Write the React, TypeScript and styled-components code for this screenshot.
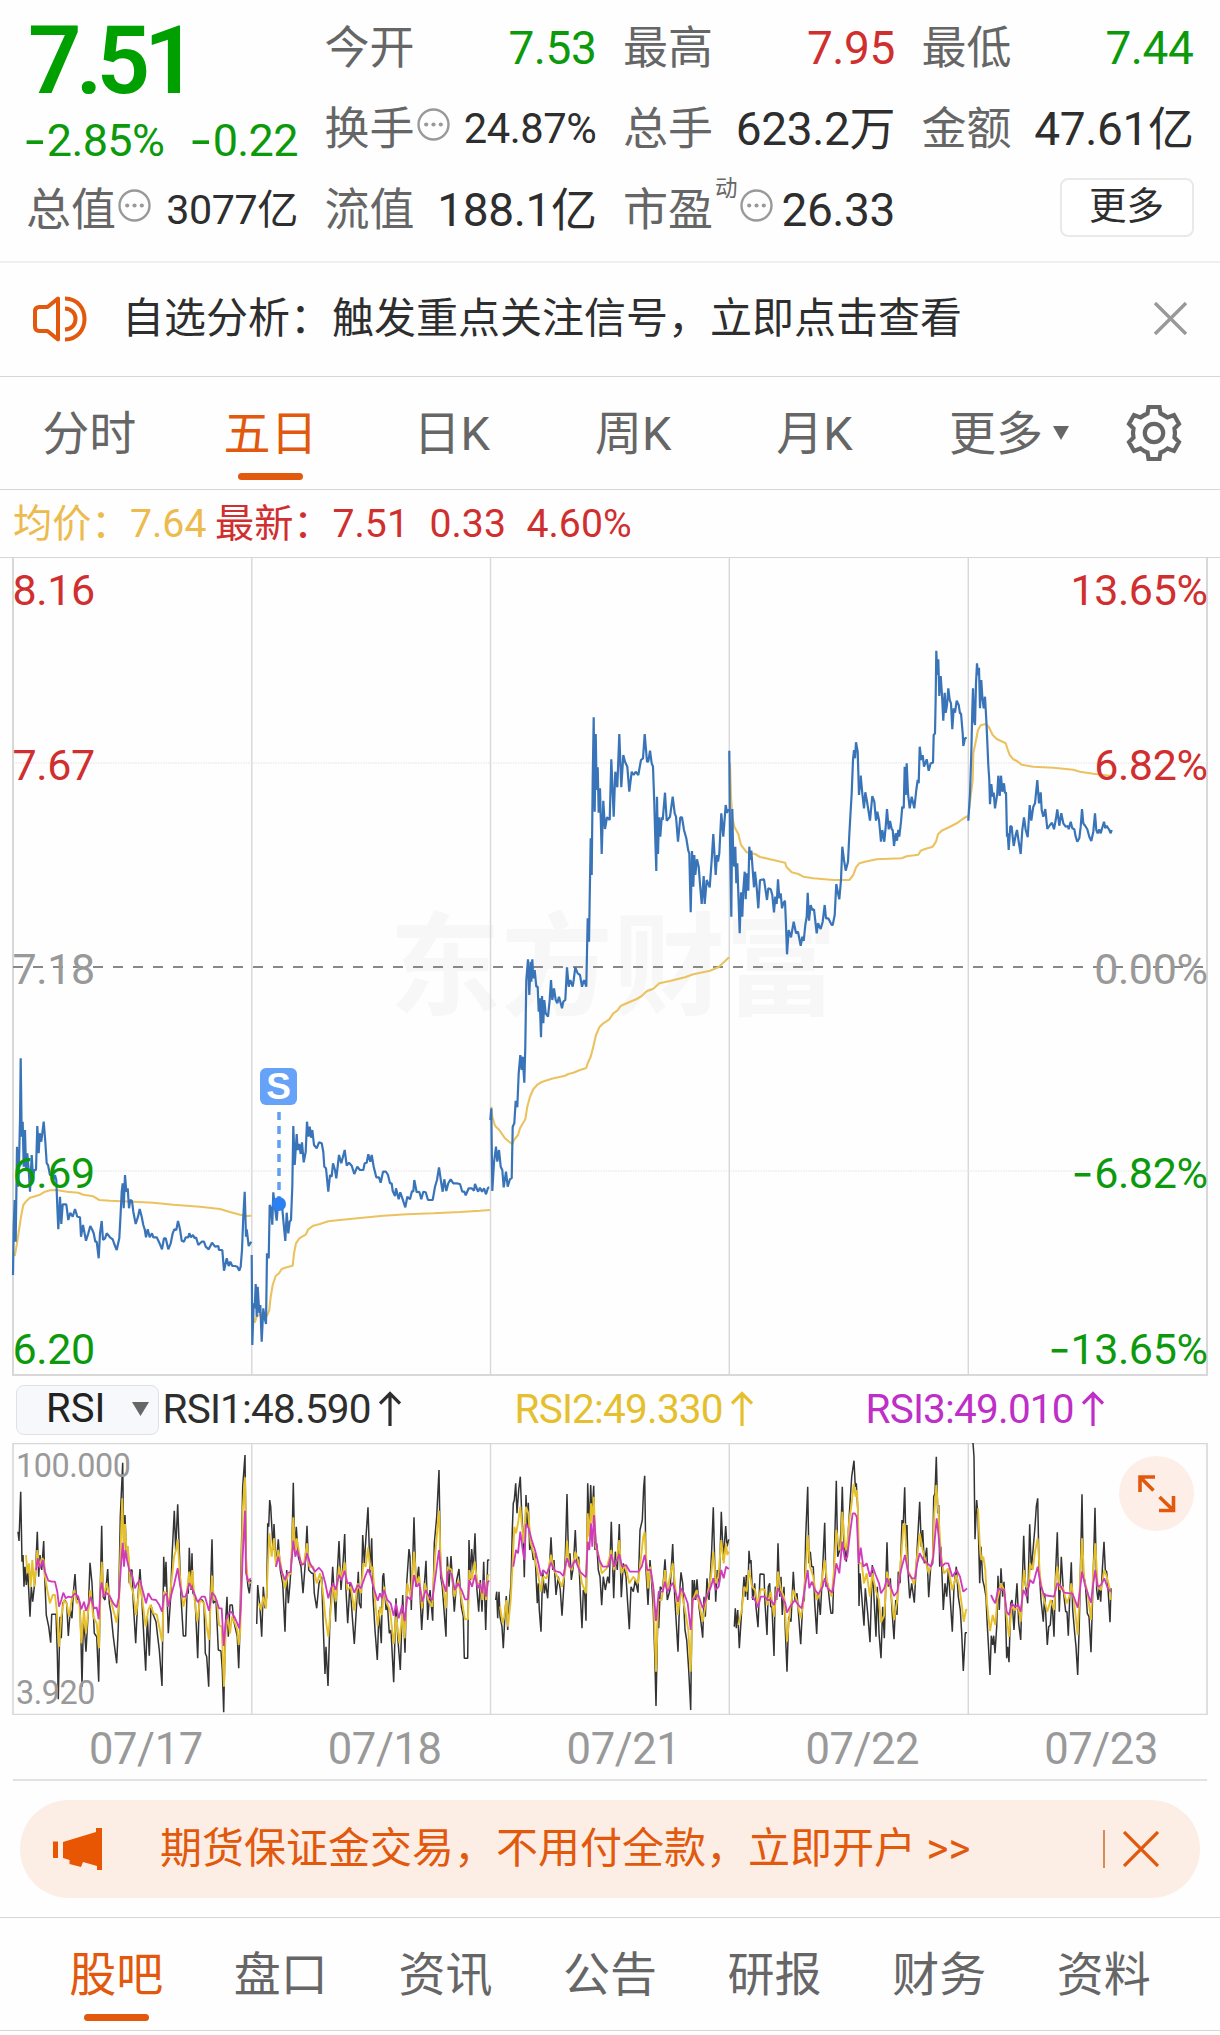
import React from "react";
import styled, { createGlobalStyle } from "styled-components";

const GREEN = "#0c9a0c";
const RED = "#d02f2f";
const ORANGE = "#e2580c";
const GREY = "#666";
const INK = "#2e2e2e";

const GlobalStyle = createGlobalStyle`
  * { box-sizing: border-box; }
  body {
    margin: 0;
    background: #fefefe;
    font-family: Roboto, "Noto Sans CJK SC", sans-serif;
    color: ${INK};
  }
`;

const Page = styled.main`
  width: 1220px;
  height: 2035px;
  display: flex;
  flex-direction: column;
  overflow: hidden;
  background: #fefefe;
`;

/* ---------- quote header ---------- */

const Header = styled.header`
  height: 263px;
  flex: none;
  display: grid;
  grid-template-columns: repeat(4, 272px);
  grid-template-rows: repeat(3, 81px);
  column-gap: 26.5px;
  padding: 7px 0 0 26px;
  border-bottom: 2px solid #efefef;
`;

const Quote = styled.div`
  grid-row: span 2;
  color: #00a000;
`;

const BigPrice = styled.div`
  font-size: 94px;
  font-weight: 600;
  line-height: 108px;
  letter-spacing: -6px;
  padding-left: 2px;
`;

const Change = styled.div`
  display: flex;
  justify-content: space-between;
  font-size: 45px;
  line-height: 52px;
  letter-spacing: -0.6px;
  color: ${GREEN};
`;

const Minus = styled.span`
  display: inline-block;
  font-family: Inter, sans-serif;
  letter-spacing: 0;
  line-height: 1;
  transform: scaleX(1.14);
  transform-origin: right;
`;

const Cell = styled.div`
  display: flex;
  align-items: center;
  height: 81px;
  white-space: nowrap;
`;

const Label = styled.span`
  padding-top: 2px;
  font-size: 45px;
  line-height: 60px;
  color: ${GREY};
`;

const Value = styled.span<{ $color?: string; $size?: number }>`
  margin-left: auto;
  font-size: ${(p) => p.$size ?? 46}px;
  line-height: 60px;
  letter-spacing: -0.4px;
  color: ${(p) => p.$color ?? INK};
`;

const Sup = styled.sup`
  align-self: flex-start;
  margin: 4px 0 0 2px;
  font-size: 22.5px;
  line-height: 30px;
  color: ${GREY};
`;

const InfoDot = styled.svg`
  width: 33px;
  height: 33px;
  margin: 0 0 8px 2px;
`;

const MoreButton = styled.button`
  margin: 0 0 4px auto;
  width: 134px;
  height: 59px;
  padding: 0 0 3px;
  border: 2px solid #e9e9e9;
  border-radius: 8px;
  background: #fff;
  font: inherit;
  font-size: 37.5px;
  line-height: 50px;
  color: ${INK};
`;

const Info = () => (
  <InfoDot viewBox="0 0 33 33" fill="#999">
    <circle cx="16.5" cy="16.5" r="15" fill="none" stroke="#999" strokeWidth="2.4" />
    <circle cx="9.2" cy="16.5" r="2.1" />
    <circle cx="16.5" cy="16.5" r="2.1" />
    <circle cx="23.8" cy="16.5" r="2.1" />
  </InfoDot>
);

/* ---------- notice ---------- */

const Notice = styled.section`
  height: 114px;
  flex: none;
  display: flex;
  align-items: center;
  padding: 0 33px 2px 32px;
  border-bottom: 1px solid #d6d6d6;
`;

const NoticeText = styled.span`
  flex: 1;
  margin-left: 34px;
  font-size: 42px;
  line-height: 56px;
  color: ${INK};
`;

/* ---------- tab bars ---------- */

const TabBar = styled.nav<{ $pad?: number; $height: number }>`
  height: ${(p) => p.$height}px;
  flex: none;
  display: flex;
  align-items: center;
  padding: 0 ${(p) => p.$pad ?? 0}px;
  border-bottom: 1px solid #d6d6d6;
`;

const Tab = styled.a<{ $width: number; $active?: boolean }>`
  position: relative;
  width: ${(p) => p.$width}px;
  height: 100%;
  display: flex;
  align-items: center;
  justify-content: center;
  padding-top: 2px;
  font-size: 47px;
  line-height: 64px;
  color: ${(p) => (p.$active ? ORANGE : GREY)};
  &::after {
    content: "";
    display: ${(p) => (p.$active ? "block" : "none")};
    position: absolute;
    bottom: 9px;
    width: 65px;
    height: 7px;
    border-radius: 4px;
    background: ${ORANGE};
  }
`;

const PeriodTab = styled(Tab)`
  left: -1.5px;
`;

const TabCaret = styled.svg`
  position: absolute;
  right: 18px;
  top: 49px;
  width: 16px;
  height: 14px;
`;

const IconSlot = styled.div`
  width: 132px;
  display: flex;
  justify-content: center;
`;

/* ---------- price legend ---------- */

const Legend = styled.div`
  height: 68px;
  flex: none;
  display: flex;
  align-items: center;
  padding: 1px 0 0 13px;
  font-size: 39.2px;
  line-height: 52px;
  color: ${RED};
  border-bottom: 1px solid #d6d6d6;
  white-space: nowrap;
`;

const LegendItem = styled.span<{ $width: number; $color?: string }>`
  width: ${(p) => p.$width}px;
  color: ${(p) => p.$color ?? "inherit"};
`;

/* ---------- charts ---------- */

const Panel = styled.section<{ $height: number }>`
  position: relative;
  flex: none;
  height: ${(p) => p.$height}px;
`;

const Plot = styled.svg`
  position: relative;
  display: block;
  width: 1220px;
  height: 100%;
`;

const AxisLabel = styled.span<{ $top: number; $side: "left" | "right"; $color: string; $size?: number; $inset?: number }>`
  position: absolute;
  top: ${(p) => p.$top}px;
  ${(p) => p.$side}: ${(p) => p.$inset ?? 12.5}px;
  transform: translateY(-50%);
  font-size: ${(p) => p.$size ?? 43}px;
  line-height: 1;
  letter-spacing: -0.4px;
  white-space: nowrap;
  color: ${(p) => p.$color};
`;

const Watermark = styled.div`
  position: absolute;
  left: 389px;
  top: 331px;
  font-size: 112px;
  line-height: 160px;
  font-weight: 700;
  color: #f7f7f7;
`;

const Marker = styled.div`
  position: absolute;
  left: 260px;
  top: 510px;
  width: 37px;
  height: 37px;
  border-radius: 6px;
  background: #65a2f8;
  color: #fff;
  font: 700 37px/37px "Liberation Sans", sans-serif;
  text-align: center;
`;

const IndicatorBar = styled.div`
  height: 67px;
  flex: none;
  display: flex;
  align-items: center;
  padding-left: 16px;
  font-size: 40.5px;
`;

const IndicatorPicker = styled.button`
  width: 143px;
  height: 50px;
  display: flex;
  align-items: center;
  justify-content: space-between;
  padding: 0 9px 2px 29px;
  border: 1px solid #dfe1e5;
  border-radius: 8px;
  background: #f6f8fb;
  font: inherit;
  font-size: 40px;
  line-height: 46px;
  color: #222;
`;

const Indicator = styled.span<{ $color: string; $width: number }>`
  display: flex;
  align-items: center;
  gap: 8px;
  width: ${(p) => p.$width}px;
  padding: 0 0 2px 3.5px;
  line-height: 50px;
  letter-spacing: -0.8px;
  color: ${(p) => p.$color};
`;

const ExpandButton = styled.button`
  position: absolute;
  right: 26px;
  top: 13px;
  width: 75px;
  height: 75px;
  padding: 0;
  border: 0;
  border-radius: 50%;
  background: #fdefe7;
`;

const Dates = styled.div`
  height: 66px;
  flex: none;
  margin: 0 13px;
  display: grid;
  grid-template-columns: repeat(5, 1fr);
  border-bottom: 2px solid #e2e2e2;
`;

const DateText = styled.span`
  padding: 1px 0 0 27px;
  text-align: center;
  font-size: 43.5px;
  line-height: 67px;
  letter-spacing: -0.4px;
  color: #999;
`;

/* ---------- promo ---------- */

const PromoWrap = styled.section`
  height: 137px;
  flex: none;
  padding: 19px 20px 0;
  border-bottom: 1px solid #d6d6d6;
`;

const Promo = styled.div`
  height: 98px;
  display: flex;
  align-items: center;
  padding: 0 41px 0 32px;
  border-radius: 49px;
  background: #fceee5;
  color: ${ORANGE};
`;

const PromoText = styled.span`
  flex: 1;
  margin-left: 56px;
  font-size: 42px;
  line-height: 56px;
`;

const Divider = styled.i`
  width: 2px;
  height: 38px;
  margin: 0 18px 0 0;
  background: #dc8a58;
`;

/* ---------- series: coordinates are thirds of a pixel ---------- */

type Piece = [number, number, string];

const price: Piece[] = [
  [0, 1020, "39,765 41,620 44,540 47,665 51,380 54,500 57,430 60,300 62,115 65,350 68,305 71,440 75,330 78,450 82,400 86,450 90,515 95,405 99,470 103,450 108,450 112,318 116,400 119,340 124,365 131,305 136,365 140,430 144,435 150,465 155,465 160,480 165,465 169,480 172,560 175,628 180,530 184,612 188,553 199,553 205,600 211,578 218,590 225,567 232,590 240,592 243,650 249,615 258,662 265,640 271,618 276,628 281,640 286,665 290,665 296,715 300,640 305,603 309,660 315,655 320,640 330,652 338,658 343,672 350,690 358,655 361,600 365,515 368,490 371,565 375,465 379,515 383,505 387,565 391,540 396,543 400,575 407,612 414,590 419,567 425,590 430,615 434,628 438,652 443,628 449,652 456,640 460,652 470,652 478,668 486,688 492,655 497,655 505,688 512,670 518,640 523,628 529,630 534,603 540,628 545,662 552,665 557,652 565,652 568,640 573,652 579,645 584,655 588,652 595,675 605,665 612,665 617,680 626,688 636,668 645,680 655,678 657,690 667,690 672,752 680,715 686,738 691,725 697,738 705,738 712,740 718,752 722,740 726,690 730,590 734,515 738,650 740,628 746,678 754,665"],
  [0, 1020, "755,705 757,975 761,850 764,865 767,792 770,890 773,800 778,880 781,855 785,965 790,865 794,895 798,912 801,700 806,715 809,555 813,565 817,614 820,517 825,565 830,602 835,540 840,555 846,555 850,600 856,663 860,578 865,640 869,605 873,600 877,500 880,318 884,435 890,342 893,390 898,372 902,402 906,367 911,427 917,395 921,305 925,350 929,320 933,353 937,330 942,375 950,385 957,367 965,370 970,395 973,440 978,445 985,515 990,465 995,470 999,430 1005,450 1009,475 1017,405 1024,430 1034,390 1040,437 1047,428 1055,437 1063,462 1072,440 1080,450 1090,450 1094,430 1100,428 1105,403 1111,425 1115,405 1121,440 1129,472 1137,472 1142,488 1149,455 1158,455 1164,465 1170,490 1175,490 1178,513 1185,528 1188,505 1196,538 1201,517 1208,538 1216,562 1222,530 1230,538 1236,513 1240,515 1243,480 1250,517 1258,515 1264,538 1270,515 1277,517 1284,540 1298,540 1305,500 1311,480 1317,442 1324,490 1328,515 1333,478 1339,513 1345,490 1352,478 1360,490 1370,490 1380,492 1387,515 1393,515 1397,526 1406,505 1415,505 1422,512 1425,492 1434,515 1440,503 1446,515 1452,505 1458,523 1464,503 1468,503"],
  [480, 680, "31,1320 34,1285 37,1533 42,1447 48,1400 52,1445 57,1410 62,1460 67,1470 71,1522 78,1475 83,1520 90,1497 95,1495 98,1340 103,1330 107,1262 112,1282 116,1180 121,1125 125,1170 128,1130 133,1208 136,1100 139,900 144,838 148,945 152,845 154,905 157,838 160,895 164,870 169,920 173,920 176,995 179,955 183,1072 186,948 190,1030 193,960 197,1000 204,1010 209,960 213,900 217,960 222,925 227,960 232,970 237,950 246,985 250,965 256,960 261,862 266,920 271,900 278,920 281,900 286,862 293,880 300,885 306,920 312,900 319,920 323,715 327,785 330,600 332,475 335,585 338,300 341,112 344,395 347,162 350,330 353,262 356,398 360,325 365,522 370,362 375,447 381,412 389,420 394,238 401,410 406,275 412,322 418,162 424,322 430,225 435,245 442,260 448,335 455,275 461,285 467,275 475,285 483,240 489,235 494,162 501,245 505,245 510,212 515,250 519,260 523,370 526,480 529,573 531,350 534,522 537,412 541,470 545,412 548,420 555,338 560,422 570,410 578,350 584,400 588,410 594,485 601,412 606,412 612,450 619,475 625,512 628,520 632,697 636,513 640,620 643,525 646,585 651,538 656,560 660,612 665,672 671,588 674,672 680,600 689,622 695,540 700,462 707,585 711,525 714,545 718,520 724,400 730,470 737,375 741,398 745,390 748,390"],
  [480, 680, "748,212 750,470 754,710 757,387 760,540 763,560 766,500 769,610 772,550 775,640 779,760 783,637 787,710 790,630 794,575 797,658 800,580 805,632 808,500 811,540 814,512 818,570 822,622 825,575 830,622 835,685 840,600 852,598 856,625 861,660 865,625 872,628 877,645 882,697 886,650 890,672 894,598 898,655 902,640 906,685 910,670 915,662 918,735 921,823 926,750 933,772 941,725 948,760 954,755 962,797 967,770 971,783 976,735 980,710 983,638 987,722 992,675 997,690 1002,688 1010,760 1014,730 1022,747 1028,725 1034,675 1038,715 1045,715 1055,735 1058,735 1064,705 1069,612 1074,640 1078,658 1083,600 1087,500 1092,540 1097,572 1104,545 1108,465 1112,390 1115,340 1119,240 1122,210 1125,235 1128,187 1133,215 1137,345"],
  [840, 620, "57,525 62,467 67,520 72,565 76,517 82,550 90,602 97,528 103,545 108,602 112,575 117,600 123,665 127,630 133,665 137,620 141,567 146,628 150,603 155,628 158,630 162,678 167,640 171,662 175,630 178,650 183,605 187,560 191,565 194,440 197,525 200,430 204,520 209,565 215,530 223,565 229,510 233,480 236,490 239,380 244,420 248,405 252,440 260,418 266,452 272,430 279,428 281,345 285,340 287,230 289,92 292,165 295,118 298,228 302,168 306,225 310,302 314,218 317,278 321,255 325,205 329,240 333,250 337,328 341,265 345,278 350,242 356,255 360,280 363,280 368,340 370,378 375,355 380,353"],
  [840, 620, "385,602 390,520 394,400 397,270 399,205 402,300 405,315 408,190 411,130 414,165 417,143 420,265 424,180 427,230 431,265 435,230 439,300 441,345 445,435 448,480 450,553 454,492 458,530 461,518 465,565 472,520 475,467 479,528 483,467 487,515 492,490 495,520 498,517 501,650 503,640 506,690 511,618 515,620 517,640 521,678 527,645 531,630 536,665 542,702 547,630 552,592 557,630 563,652 569,555 574,602 580,560 585,550 592,480 597,550 602,517 605,570 610,590 616,567 622,627 630,615 636,608 642,628 648,595 652,568 658,617 664,580 670,610 677,620 684,618 686,628 692,605 697,625 703,628 707,650 712,665 718,655 722,620 726,567 730,610 736,618 742,628 748,650 754,663 760,635 765,580 769,630 773,640 778,628 782,640 792,605 796,625 800,617 808,630 812,640 815,630"],
];

const average: Piece[] = [
  [0, 1020, "44,708 50,675 57,630 64,585 70,555 80,542 90,533 105,529 120,524 135,515 150,511 170,510 200,515 235,518 250,524 280,529 298,540 330,542 400,545 460,548 520,554 600,560 660,567 690,576 720,584 740,588 754,587"],
  [0, 1020, "757,880 764,908 770,890 785,880 800,890 808,870 812,830 818,795 827,768 837,760 845,747 860,742 878,737 882,700 888,670 898,655 918,643 925,628 940,617 960,612 985,604 1020,600 1080,594 1150,587 1220,583 1300,580 1380,576 1440,572 1470,570"],
  [480, 680, "34,1280 37,1310 45,1337 58,1350 75,1375 97,1393 102,1380 114,1365 120,1345 136,1318 142,1280 150,1250 160,1228 172,1214 185,1206 215,1196 255,1187 265,1182 280,1178 300,1170 319,1164 323,1150 332,1130 340,1100 348,1065 358,1042 370,1030 388,1018 400,1000 412,992 422,978 440,970 470,957 485,948 500,934 520,926 538,910 570,903 615,892 640,883 690,872 715,862 730,848 747,832"],
  [480, 680, "750,250 753,350 757,410 763,440 775,462 783,495 800,517 825,522 840,531 880,540 915,548 920,562 935,577 955,582 970,590 1000,595 1060,600 1108,600 1120,585 1128,562 1138,550 1155,545 1190,538 1265,535 1280,529 1315,524 1322,512 1335,507 1358,500 1368,485 1374,463 1385,452 1410,440 1430,430 1448,417 1465,407"],
  [840, 620, "387,570 393,520 398,480 400,400 407,365 414,330 422,316 438,312 447,322 458,345 470,357 497,370 502,385 509,405 520,418 532,424 545,434 580,440 640,443 700,449 720,455 760,461 815,468"],
];

const rsi1: Piece[] = [
  [0, 1370, "54,485 57,513 62,365 66,575 69,555 72,650 75,590 79,645 83,600 86,660 90,740 94,650 98,695 103,650 106,625 112,485 116,620 120,555 125,600 131,513 134,620 139,735 146,770 152,818 155,733 168,733 172,850 175,988 180,740 184,805 188,700 195,690 200,700 205,798 211,720 216,745 220,670 225,612 229,680 235,690 240,700 243,810 246,950 250,760 254,790 258,845 265,720 270,578 276,640 283,790 290,800 296,935 301,650 305,467 309,680 315,690 323,597 328,700 333,730 340,800 350,880 355,770 358,600 361,440 368,278 371,520 375,435 379,550 384,530 388,640 392,600 396,600 400,700 407,820 413,690 420,597 425,680 430,770 437,902 442,740 448,857 453,705 458,730 468,755 472,790 478,840 486,948 491,560 495,650 498,575 505,790 512,680 516,560 523,422 527,540 533,403 538,540 543,680 550,798 557,798 561,670 565,670 568,533 573,660 576,550 579,670 585,680 593,865 598,690 607,690 612,700 616,850 620,860 626,950 631,680 636,508 640,700 648,690 655,840 663,843 667,900 671,1027 676,770 681,680 685,800 690,705 697,705 701,750 705,770 712,800 716,895 719,800 723,600 728,350 735,255 739,600 744,650 748,670 752,630"],
  [0, 1370, "770,762 773,645 780,715 785,800 790,650 795,715 800,680 803,460 806,470 809,390 812,410 816,480 819,540 822,462 828,590 835,508 841,600 848,640 855,785 860,600 865,700 870,640 875,560 880,338 884,540 889,470 895,560 903,590 909,670 915,590 921,467 926,600 935,610 940,610 943,670 950,715 957,640 965,620 969,750 975,912 978,830 984,948 990,740 998,590 1003,680 1007,755 1012,610 1017,513 1023,660 1029,580 1034,492 1038,660 1043,760 1050,640 1057,740 1063,822 1070,700 1075,605 1078,700 1083,715 1088,495 1093,580 1098,500 1104,412 1110,610 1115,505 1119,680 1125,780 1132,870 1137,720 1144,820 1148,620 1151,610 1158,720 1162,700 1168,790 1173,780 1181,937 1188,685 1193,800 1201,900 1208,675 1215,848 1220,640 1227,537 1230,560 1234,720 1242,442 1248,650 1256,590 1265,780 1272,660 1278,572 1283,750 1290,660 1298,752 1303,520 1310,440 1317,300 1322,620 1327,650 1338,800 1342,560 1347,650 1353,558 1363,725 1370,630 1377,597 1384,710 1390,740 1393,865 1403,865 1407,510 1411,630 1415,537 1420,600 1425,490 1430,650 1436,725 1441,630 1446,725 1451,575 1457,780 1463,570 1468,570"],
  [480, 1370, "47,690 50,665 53,745 57,665 60,740 66,770 70,835 75,730 79,678 83,780 88,700 93,640 97,480 100,400 103,390 107,340 111,430 116,360 121,320 125,430 130,500 133,622 138,375 142,470 145,398 149,540 154,520 160,570 165,550 172,700 175,640 178,720 183,785 188,600 193,670 197,640 203,685 208,600 213,502 218,600 222,570 228,675 235,620 241,660 246,737 252,640 256,560 261,372 266,590 270,550 274,630 280,590 286,480 290,580 296,560 302,700 306,775 310,660 314,670 318,752 323,340 328,480 332,345 336,450 341,347 345,540 350,520 355,600 360,620 365,706 370,620 376,660 383,620 388,640 394,455 401,685 406,545 412,600 418,462 424,682 430,580 438,620 448,778 453,650 460,665 466,630 474,668 480,480 487,450 491,350 494,317 498,600 504,705 510,570 515,640 520,720 524,850 528,1008 534,700 536,775 541,650 548,660 555,568 562,690 570,660 578,522 584,680 594,845 600,650 603,607 608,640 615,780 620,810 626,900 632,1020 637,630 641,690 643,630 647,690 651,628 657,710 662,750 668,803 672,680 676,740 681,625 687,690 695,540 700,412 707,695 712,600 718,640 724,425 730,570 737,468 741,530 746,508"],
  [480, 1370, "763,770 766,715 769,775 773,720 778,835 784,740 788,680 792,620 796,680 799,615 803,690 807,542 810,580 813,570 818,690 824,640 828,710 834,772 840,612 852,613 855,700 861,795 865,650 869,640 872,710 876,710 882,858 886,650 890,690 894,520 899,680 903,620 907,735 912,650 916,780 921,905 926,740 933,755 940,605 945,690 951,670 962,823 968,700 973,690 977,500 983,350 987,580 991,545 995,590 1000,590 1004,700 1010,792 1015,670 1021,735 1027,620 1034,458 1038,650 1043,640 1049,700 1053,730 1058,730 1063,560 1069,332 1073,560 1079,540 1083,480 1087,350 1091,510 1099,575 1104,500 1110,400 1115,320 1122,272 1126,350 1129,340 1134,430 1137,708 1140,610 1146,690 1152,767 1156,655 1163,730 1170,817 1177,585 1183,700 1188,800 1192,650 1197,790 1203,865 1208,710 1213,805 1218,620 1221,517 1225,650 1231,625 1236,720 1242,808 1247,690 1251,735 1255,605 1260,640 1266,450 1270,460 1274,352 1278,530 1281,465 1285,620 1289,685 1295,640 1303,698 1308,600 1313,505 1319,395 1324,530 1328,480 1333,580 1340,533 1346,682 1352,590 1358,580 1361,380 1365,370 1369,260 1373,430 1376,405 1379,590 1383,530 1390,720 1395,640 1400,680 1405,600 1411,690 1417,785 1422,650 1429,590 1435,680 1441,720 1445,790 1450,903 1456,788 1461,788"],
  [840, 1370, "399,219 402,260 405,508 410,390 414,440 419,640 423,530 428,630 433,650 438,680 441,750 445,820 450,915 454,797 458,825 461,797 465,850 470,770 474,617 478,720 483,595 488,680 492,635 496,710 500,865 503,830 507,877 512,700 516,690 522,780 526,710 531,640 536,760 542,810 547,640 551,497 556,640 563,700 569,463 574,600 580,530 585,470 589,410 593,385 597,590 603,690 610,755 614,670 622,825 626,770 631,765 636,690 642,800 647,600 652,487 658,725 664,560 670,660 677,725 681,725 685,797 690,660 694,577 698,720 704,790 708,830 713,915 718,760 722,560 726,373 730,610 736,640 742,730 747,740 753,847 759,640 765,413 770,660 774,690 778,650 782,695 787,600 792,515 796,600 800,605 805,670 810,757 813,655"],
];

const rsi2: Piece[] = [
  [0, 1370, "78,555 82,610 87,580 92,650 97,570 103,650 112,540 118,590 125,565 131,570 135,620 142,660 150,700 158,675 165,675 170,720 177,830 184,740 192,690 200,700 207,740 215,690 223,660 230,700 238,690 244,820 252,720 258,790 265,720 271,660 280,740 290,760 297,835 302,640 305,575 310,680 320,640 332,690 340,720 350,758 357,700 361,560 367,385 371,540 375,462 380,550 384,530 390,640 400,670 408,735 414,690 420,632 428,700 437,770 445,720 452,705 460,730 470,733 478,770 486,815 492,665 500,670 505,710 515,630 522,560 528,540 533,508 540,620 550,710 560,670 568,605 573,655 577,600 583,680 592,755 600,690 612,700 620,770 627,810 632,690 636,617 642,690 650,690 657,765 665,770 672,950 677,780 683,740 690,790 696,740 705,760 712,780 716,825 721,780 728,420 735,322 738,560 743,630 752,640"],
  [0, 1370, "776,700 783,720 790,680 798,715 803,600 808,490 815,560 822,505 828,590 835,540 845,600 855,655 862,620 872,610 880,442 886,550 890,505 903,580 912,580 921,520 928,590 940,590 950,640 960,610 968,660 976,740 985,800 993,710 1000,640 1007,695 1017,590 1025,630 1034,577 1042,660 1052,650 1063,722 1073,640 1083,670 1090,580 1097,590 1104,533 1112,600 1118,590 1125,690 1133,768 1140,710 1146,735 1152,650 1160,700 1170,720 1181,822 1189,740 1198,820 1207,730 1214,805 1222,640 1232,680 1242,545 1250,640 1258,620 1266,715 1275,640 1285,690 1297,710 1305,560 1317,422 1323,600 1330,650 1338,715 1343,590 1355,600 1363,680 1375,630 1385,690 1395,748 1404,748 1408,600 1415,630 1424,575 1432,640 1440,640 1447,690 1452,630 1458,690 1464,615 1468,615"],
  [480, 1370, "60,710 68,760 73,740 79,690 84,770 92,690 97,600 103,470 108,490 114,460 121,410 126,470 133,520 138,410 145,430 152,520 160,545 172,600 183,665 190,620 200,625 213,555 222,600 232,620 246,650 256,600 261,512 268,590 276,600 286,545 296,580 306,640 318,670 323,430 328,500 333,400 337,460 341,380 347,530 357,560 365,610 380,595 394,540 401,600 410,570 418,510 424,610 436,585 448,640 460,620 474,640 482,570 490,500 494,485 500,590 504,655 511,590 520,660 528,905 535,690 545,690 555,600 562,660 578,580 586,650 594,735 602,655 615,720 625,780 632,905 638,690 650,660 660,715 668,755 676,710 683,670 693,620 700,545 707,640 715,620 724,510 731,580 738,520 742,555 746,545"],
  [480, 1370, "775,765 785,720 793,650 800,665 807,600 816,650 825,660 834,705 842,657 855,660 862,705 872,665 882,740 888,680 894,605 903,660 912,680 921,815 930,720 940,660 950,690 962,745 970,700 977,600 983,495 990,590 1000,620 1010,690 1020,670 1034,570 1042,640 1055,680 1062,600 1069,480 1078,540 1083,530 1087,425 1095,530 1100,540 1108,450 1115,400 1121,342 1127,380 1131,360 1134,430 1137,580 1145,580 1152,640 1160,610 1170,680 1177,610 1187,660 1197,690 1203,757 1213,735 1221,605 1232,660 1242,750 1252,690 1265,540 1270,470 1274,460 1283,600 1293,620 1303,645 1310,570 1319,490 1328,540 1336,570 1346,610 1358,570 1363,430 1369,345 1376,440 1383,560 1392,610 1405,595 1417,660 1429,615 1438,650 1446,710 1451,755 1458,720 1461,718"],
  [840, 1370, "414,415 419,520 424,570 430,560 436,600 441,700 450,783 458,735 466,765 472,690 483,640 492,660 500,740 507,800 515,710 525,720 535,710 542,755 548,650 552,600 558,650 566,650 570,580 578,600 586,540 593,505 600,620 610,680 622,725 632,690 642,720 648,620 652,590 660,660 668,650 680,700 688,680 694,640 703,700 713,795 720,640 726,505 733,630 743,670 753,750 760,600 766,520 773,650 783,660 793,600 800,620 808,650 813,690"],
];

const rsi3: Piece[] = [
  [0, 1370, "108,600 113,565 120,595 128,570 135,605 145,632 155,635 165,635 172,665 177,710 184,690 190,668 197,685 205,680 215,682 225,670 235,680 244,718 252,695 258,722 267,700 272,680 282,715 290,712 296,748 301,665 305,637 312,680 320,668 330,680 340,700 350,712 357,680 362,600 368,518 372,590 376,540 381,570 388,600 395,610 405,655 412,640 420,630 430,668 438,700 445,670 455,688 468,690 478,705 486,725 492,678 500,670 505,710 515,670 522,645 533,595 540,645 548,680 557,680 568,640 580,662 593,697 605,680 615,680 627,722 636,668 645,678 657,715 665,715 671,828 678,750 686,730 694,725 703,740 712,760 718,775 722,720 728,560 735,422 738,610 745,635 752,625"],
  [0, 1370, "828,590 835,560 845,605 855,630 862,610 872,605 880,512 886,560 892,540 905,585 915,580 921,550 930,580 945,605 957,593 967,605 976,640 985,685 993,655 1000,640 1007,660 1017,615 1025,630 1034,602 1042,640 1052,638 1063,668 1073,645 1083,655 1095,620 1104,598 1113,620 1120,650 1133,692 1140,670 1146,685 1152,660 1162,690 1172,700 1181,737 1188,700 1196,745 1207,705 1214,753 1222,680 1233,690 1242,615 1250,650 1258,640 1267,695 1277,660 1287,680 1297,690 1305,630 1317,540 1324,620 1330,640 1338,665 1343,605 1355,612 1364,660 1375,640 1387,665 1395,688 1404,688 1408,630 1416,650 1425,615 1433,655 1440,640 1447,670 1452,630 1458,680 1464,635 1468,632"],
  [480, 1370, "100,590 108,540 114,550 121,485 128,540 133,570 138,462 146,475 155,510 165,540 175,580 183,618 190,600 200,612 213,578 225,603 240,607 250,618 261,565 272,595 286,570 300,605 318,622 323,515 328,540 333,460 337,530 342,435 348,520 358,570 368,590 385,590 394,553 402,590 418,553 426,590 438,585 450,605 475,605 485,590 494,555 502,600 512,600 520,650 528,753 536,665 548,665 555,635 562,665 578,638 588,672 594,695 602,655 612,670 623,700 632,780 638,690 655,675 668,715 680,680 693,650 700,625 707,660 716,650 724,600 731,625 738,590 746,597"],
  [480, 1370, "815,680 825,690 834,712 842,680 855,680 862,690 872,690 882,705 894,655 905,680 916,700 921,728 930,710 945,690 955,705 965,715 975,650 983,600 988,655 995,635 1005,660 1015,672 1028,650 1034,625 1043,655 1057,668 1063,630 1069,580 1078,610 1087,515 1095,570 1102,560 1110,490 1118,430 1124,430 1130,440 1136,580 1142,533 1150,590 1160,580 1170,620 1178,590 1187,615 1197,640 1203,670 1213,655 1221,625 1232,650 1242,678 1252,665 1263,600 1275,555 1285,610 1295,625 1305,625 1312,580 1319,550 1330,570 1342,580 1353,590 1360,560 1365,500 1370,445 1377,510 1385,590 1395,580 1405,580 1417,620 1430,600 1440,620 1450,665 1461,655"],
  [840, 1370, "453,675 460,690 466,700 475,655 483,660 492,660 500,725 507,735 515,700 525,710 535,705 542,725 550,660 560,680 570,630 580,640 593,590 602,645 612,675 630,678 642,680 652,640 662,648 672,668 690,670 697,670 705,690 713,713 720,660 726,605 735,645 745,675 753,698 760,640 766,600 773,650 783,645 793,625 803,655 813,665"],
];

const toPoints = ([ox, oy, raw]: Piece, top: number) =>
  raw
    .split(" ")
    .map((p) => {
      const [x, y] = p.split(",").map(Number);
      return `${(ox + x / 3).toFixed(1)},${(oy + y / 3 - top).toFixed(1)}`;
    })
    .join(" ");

const Series = ({ pieces, top, color, width }: { pieces: Piece[]; top: number; color: string; width: number }) => (
  <g fill="none" stroke={color} strokeWidth={width} strokeLinejoin="bevel">
    {pieces.map((p, i) => (
      <polyline key={i} points={toPoints(p, top)} />
    ))}
  </g>
);

const dayLines = [251.8, 490.5, 729.3, 968.3];
const PRICE_TOP = 558;
const RSI_TOP = 1443;

const Caret = ({ color = GREY }: { color?: string }) => (
  <svg width="17" height="14" viewBox="0 0 17 14">
    <path d="M0 0H17L8.5 14Z" fill={color} />
  </svg>
);

const UpArrow = () => (
  <svg width="22" height="36" viewBox="0 0 22 36" fill="none" stroke="currentColor" strokeWidth="3.2">
    <path d="M11 35V3M1 12.5L11 2.5L21 12.5" />
  </svg>
);

export default function App() {
  return (
    <>
      <GlobalStyle />
      <Page>
        <Header>
          <Quote>
            <BigPrice>7.51</BigPrice>
            <Change>
              <span><Minus>-</Minus>2.85%</span>
              <span><Minus>-</Minus>0.22</span>
            </Change>
          </Quote>
          <Cell><Label>今开</Label><Value $color={GREEN}>7.53</Value></Cell>
          <Cell><Label>最高</Label><Value $color={RED}>7.95</Value></Cell>
          <Cell><Label>最低</Label><Value $color={GREEN}>7.44</Value></Cell>
          <Cell><Label>换手</Label><Info /><Value $size={41.7}>24.87%</Value></Cell>
          <Cell><Label>总手</Label><Value>623.2万</Value></Cell>
          <Cell><Label>金额</Label><Value>47.61亿</Value></Cell>
          <Cell><Label>总值</Label><Info /><Value $size={41.2}>3077亿</Value></Cell>
          <Cell><Label>流值</Label><Value>188.1亿</Value></Cell>
          <Cell><Label>市盈</Label><Sup>动</Sup><Info /><Value>26.33</Value></Cell>
          <Cell><MoreButton>更多</MoreButton></Cell>
        </Header>

        <Notice>
          <svg width="56" height="48" viewBox="0 0 56 48" fill="none" stroke={ORANGE} strokeWidth="4">
            <path d="M26 3.5V44.5L15.500 36H7.500Q3 36 3 31.500V16.500Q3 12 7.500 12H15.500Z" strokeLinejoin="round" />
            <path d="M33 3.500C59 4 59 44 33 44.500" />
            <path d="M33 13.500C47 14 47 34 33 34.500" />
          </svg>
          <NoticeText>自选分析：触发重点关注信号，立即点击查看</NoticeText>
          <svg width="33" height="33" viewBox="0 0 33 33" stroke="#999" strokeWidth="3.4">
            <path d="M1 1L32 32M32 1L1 32" />
          </svg>
        </Notice>

        <TabBar $height={113}>
          <PeriodTab $width={181.4}>分时</PeriodTab>
          <PeriodTab $width={181.4} $active>五日</PeriodTab>
          <PeriodTab $width={181.4}>日K</PeriodTab>
          <PeriodTab $width={181.4}>周K</PeriodTab>
          <PeriodTab $width={181.4}>月K</PeriodTab>
          <PeriodTab $width={181.4}>
            更多
            <TabCaret viewBox="0 0 16 14"><path d="M0 0H16L8 14Z" fill={GREY} /></TabCaret>
          </PeriodTab>
          <IconSlot>
            <svg width="56" height="58" viewBox="0 0 56 58" fill="none" stroke={GREY} strokeWidth="4.2">
              <path d="M22.500 3H33.500L34.500 9.500Q38 11 41.500 13.500L48 11L53 20L48.500 24.500Q49.500 29 48.500 33.500L53 38L48 47L41.500 44.500Q38 47.500 34.500 48.500L33.500 55H22.500L21.500 48.500Q18 47.500 14.500 44.500L8 47L3 38L7.500 33.500Q6.500 29 7.500 24.500L3 20L8 11L14.500 13.500Q18 11 21.500 9.500Z" />
              <circle cx="28" cy="29" r="9.200" />
            </svg>
          </IconSlot>
        </TabBar>

        <Legend>
          <LegendItem $width={117} $color="#ecba4d">均价：</LegendItem>
          <LegendItem $width={85} $color="#ecba4d">7.64</LegendItem>
          <LegendItem $width={117.500}>最新：</LegendItem>
          <LegendItem $width={97}>7.51</LegendItem>
          <LegendItem $width={97}>0.33</LegendItem>
          <LegendItem $width={110}>4.60%</LegendItem>
        </Legend>

        <Panel $height={818}>
          <Watermark>东方财富</Watermark>
          <Plot viewBox="0 0 1220 818">
            <g stroke="#d8d8d8" strokeWidth="1.4">
              <path d="M13 0V817H1207V0" fill="none" strokeWidth="2" />
              {dayLines.map((x) => <path key={x} d={`M${x} 0V817`} />)}
            </g>
            <path d="M13 205H1207M13 613H1207" stroke="#e3e3e3" strokeWidth="1.2" strokeDasharray="1.500 1" />
            <path d="M13 409H1207" stroke="#888" strokeWidth="2" strokeDasharray="10 10" />
            <Series pieces={average} top={PRICE_TOP} color="#ebc260" width={2.1} />
            <Series pieces={price} top={PRICE_TOP} color="#3974b8" width={2.2} />
            <path d="M279 554V646" stroke="#629ff0" strokeWidth="3.500" strokeDasharray="8 6" />
            <circle cx="279" cy="646" r="7" fill="#2b80f2" />
          </Plot>
          <Marker>S</Marker>
          <AxisLabel $side="left" $top={31.5} $color={RED}>8.16</AxisLabel>
          <AxisLabel $side="left" $top={207} $color={RED}>7.67</AxisLabel>
          <AxisLabel $side="left" $top={411} $color="#999">7.18</AxisLabel>
          <AxisLabel $side="left" $top={615} $color={GREEN}>6.69</AxisLabel>
          <AxisLabel $side="left" $top={791} $color={GREEN}>6.20</AxisLabel>
          <AxisLabel $side="right" $top={31.5} $color={RED}>13.65%</AxisLabel>
          <AxisLabel $side="right" $top={207} $color={RED}>6.82%</AxisLabel>
          <AxisLabel $side="right" $top={411} $color="#999">0.00%</AxisLabel>
          <AxisLabel $side="right" $top={615} $color={GREEN}><Minus>-</Minus>6.82%</AxisLabel>
          <AxisLabel $side="right" $top={791} $color={GREEN}><Minus>-</Minus>13.65%</AxisLabel>
        </Panel>

        <IndicatorBar>
          <IndicatorPicker>RSI<Caret /></IndicatorPicker>
          <Indicator $width={352} $color={INK}>RSI1:48.590<UpArrow /></Indicator>
          <Indicator $width={351} $color="#e5bf2d">RSI2:49.330<UpArrow /></Indicator>
          <Indicator $width={260} $color="#bd2fc6">RSI3:49.010<UpArrow /></Indicator>
        </IndicatorBar>

        <Panel $height={272}>
          <Plot viewBox="0 0 1220 272">
            <g stroke="#d8d8d8" strokeWidth="1.4">
              <path d="M13 .5H1207V271.500H13Z" fill="none" strokeWidth="1.6" />
              {dayLines.map((x) => <path key={x} d={`M${x} 0V271`} />)}
            </g>
            <Series pieces={rsi1} top={RSI_TOP} color="#333" width={1.5} />
            <Series pieces={rsi2} top={RSI_TOP} color="#e6c02b" width={1.9} />
            <Series pieces={rsi3} top={RSI_TOP} color="#cf3bbd" width={1.8} />
          </Plot>
          <AxisLabel $side="left" $inset={16} $top={22.5} $size={32.3} $color="#999">100.000</AxisLabel>
          <AxisLabel $side="left" $inset={16} $top={249.5} $size={32.3} $color="#999">3.920</AxisLabel>
          <ExpandButton>
            <svg width="75" height="75" viewBox="0 0 75 75" fill="none" stroke={ORANGE} strokeWidth="3.600">
              <path d="M36 21H21V36M21 21L34.500 34.500M40 54.500H54.500V40M54.500 54.500L40.500 41" />
            </svg>
          </ExpandButton>
        </Panel>

        <Dates>
          {["07/17", "07/18", "07/21", "07/22", "07/23"].map((d) => <DateText key={d}>{d}</DateText>)}
        </Dates>

        <PromoWrap>
          <Promo>
            <svg width="52" height="44" viewBox="0 0 52 44" fill="#e85604">
              <path d="M1 14.500H6V31H1ZM11 15L44 5V1H50V43H45V39L31 35L29 40L17.500 37V33L11 31Z" />
            </svg>
            <PromoText>期货保证金交易，不用付全款，立即开户 &gt;&gt;</PromoText>
            <Divider />
            <svg width="36" height="36" viewBox="0 0 36 36" stroke={ORANGE} strokeWidth="3.300">
              <path d="M1 1L35 35M35 1L1 35" />
            </svg>
          </Promo>
        </PromoWrap>

        <TabBar $height={113} $pad={34}>
          {["股吧", "盘口", "资讯", "公告", "研报", "财务", "资料"].map((t, i) => (
            <Tab key={t} $width={164.6} $active={i === 0}>{t}</Tab>
          ))}
        </TabBar>
      </Page>
    </>
  );
}
